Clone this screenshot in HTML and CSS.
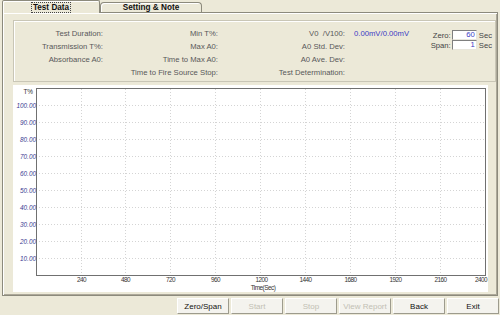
FILE: index.html
```html
<!DOCTYPE html>
<html lang="en">
<head>
    <meta charset="UTF-8">
    <title>Test Data</title>
    <link rel="stylesheet" href="styles.css">
</head>
<body>

    <div class="window">
        <div class="tabs">
            <div class="tab active"><span class="focus">Test Data</span></div>
            <div class="tab">Setting &amp; Note</div>
        </div>

        <div class="tab-panel">
            <div class="group">
                <div class="fields">
                    <span class="lbl">Test Duration:</span>
                    <span class="lbl">Min T%:</span>
                    <span class="lbl">V0 &nbsp;/V100:</span>
                    <span class="val">0.00mV/0.00mV</span>

                    <span class="lbl">Transmission T%:</span>
                    <span class="lbl">Max A0:</span>
                    <span class="lbl">A0 Std. Dev:</span>
                    <span class="val"></span>

                    <span class="lbl">Absorbance A0:</span>
                    <span class="lbl">Time to Max A0:</span>
                    <span class="lbl">A0 Ave. Dev:</span>
                    <span class="val"></span>

                    <span class="lbl"></span>
                    <span class="lbl">Time to Fire Source Stop:</span>
                    <span class="lbl">Test Determination:</span>
                    <span class="val"></span>
                </div>

                <div class="setpoints">
                    <label for="zero">Zero:</label>
                    <span class="box" id="zero">60</span>
                    <span class="unit">Sec</span>
                    <label for="span">Span:</label>
                    <span class="box" id="span">1</span>
                    <span class="unit">Sec</span>
                </div>
            </div>

            <div class="chart">
                <svg width="475" height="207" viewBox="0 0 475 207">
                    <g class="grid">
                        <line x1="23" y1="20.5" x2="472" y2="20.5"/>
                        <line x1="23" y1="37.5" x2="472" y2="37.5"/>
                        <line x1="23" y1="54.5" x2="472" y2="54.5"/>
                        <line x1="23" y1="71.5" x2="472" y2="71.5"/>
                        <line x1="23" y1="88.5" x2="472" y2="88.5"/>
                        <line x1="23" y1="105.5" x2="472" y2="105.5"/>
                        <line x1="23" y1="122.5" x2="472" y2="122.5"/>
                        <line x1="23" y1="139.5" x2="472" y2="139.5"/>
                        <line x1="23" y1="156.5" x2="472" y2="156.5"/>
                        <line x1="23" y1="173.5" x2="472" y2="173.5"/>

                        <line x1="68.5" y1="4" x2="68.5" y2="190"/>
                        <line x1="112.5" y1="4" x2="112.5" y2="190"/>
                        <line x1="157.5" y1="4" x2="157.5" y2="190"/>
                        <line x1="202.5" y1="4" x2="202.5" y2="190"/>
                        <line x1="247.5" y1="4" x2="247.5" y2="190"/>
                        <line x1="292.5" y1="4" x2="292.5" y2="190"/>
                        <line x1="337.5" y1="4" x2="337.5" y2="190"/>
                        <line x1="382.5" y1="4" x2="382.5" y2="190"/>
                        <line x1="427.5" y1="4" x2="427.5" y2="190"/>
                    </g>

                    <rect class="axes" x="23.5" y="3.5" width="449" height="187"/>

                    <text class="axis-name" x="20" y="8.5">T%</text>
                    <g class="y-labels">
                        <text x="23" y="22.8">100.00</text>
                        <text x="23" y="39.8">90.00</text>
                        <text x="23" y="56.8">80.00</text>
                        <text x="23" y="73.8">70.00</text>
                        <text x="23" y="90.8">60.00</text>
                        <text x="23" y="107.8">50.00</text>
                        <text x="23" y="124.8">40.00</text>
                        <text x="23" y="141.8">30.00</text>
                        <text x="23" y="158.8">20.00</text>
                        <text x="23" y="175.8">10.00</text>
                    </g>
                    <g class="x-labels">
                        <text x="68.5" y="197">240</text>
                        <text x="112.5" y="197">480</text>
                        <text x="157.5" y="197">720</text>
                        <text x="202.5" y="197">960</text>
                        <text x="248.5" y="197">1200</text>
                        <text x="292.5" y="197">1440</text>
                        <text x="337.5" y="197">1680</text>
                        <text x="382.5" y="197">1920</text>
                        <text x="427.5" y="197">2160</text>
                        <text x="468" y="197">2400</text>
                        <text x="250" y="204.5">Time(Sec)</text>
                    </g>
                </svg>
            </div>
        </div>

        <div class="buttons">
            <button>Zero/Span</button>
            <button disabled>Start</button>
            <button disabled>Stop</button>
            <button disabled>View Report</button>
            <button>Back</button>
            <button>Exit</button>
        </div>
    </div>

</body>
</html>
```

FILE: styles.css
```css
body {
    margin: 0;
    background-color: #ece9d8;
    font-family: "Liberation Sans", Arial, sans-serif;
}

.window {
    width: 500px;
    height: 315px;
    overflow: hidden;
}

/* tab strip */

.tabs {
    display: flex;
    align-items: flex-end;
    height: 12px;
    padding-left: 2px;
    position: relative;
    z-index: 1;
}

    .tabs .tab {
        box-sizing: border-box;
        height: 10px;
        width: 102px;
        border: 1px solid #8c8a7c;
        border-bottom: none;
        border-radius: 4px 4px 0 0;
        background-color: #ece9d8;
        font-size: 8.2px;
        font-weight: bold;
        color: #111;
        text-align: center;
        line-height: 9px;
        box-shadow: inset 1px 1px 0 #fff;
    }

    .tabs .tab.active {
        width: 98px;
        height: 13px;
        margin-bottom: -1px;
        border-radius: 2px 2px 0 0;
        padding-top: 2px;
        line-height: 9px;
    }

    .tabs .focus {
        display: inline-block;
        vertical-align: top;
        height: 9px;
        line-height: 9px;
        padding: 0 1px;
        border: 1px dotted #444;
        margin-top: -1px;
    }

/* main tab page */

.tab-panel {
    box-sizing: border-box;
    width: 496px;
    height: 284px;
    margin-left: 2px;
    padding: 7px 0 3px 10px;
    border: 1px solid #8c8a7c;
    box-shadow: inset 1px 1px 0 #fff, inset -1px -1px 0 #aca899;
}

.group {
    box-sizing: border-box;
    display: flex;
    height: 62px;
    margin-right: 1px;
    padding: 6px 3px 2px 0;
    border: 1px solid #c9c6b6;
    box-shadow: inset 1px 1px 0 #fff;
    font-size: 7.7px;
    color: #585858;
}

.fields {
    display: grid;
    grid-template-columns: 89px 115px 127px 70px;
    grid-auto-rows: 13px;
    align-items: center;
    flex-shrink: 0;
}

    .fields .lbl {
        text-align: right;
        white-space: nowrap;
    }

    .fields .val {
        padding-left: 9px;
        color: #3a3ac4;
        white-space: nowrap;
    }

.setpoints {
    margin-left: auto;
    margin-top: 3px;
    display: grid;
    grid-template-columns: auto 25px auto;
    grid-auto-rows: 10px;
    align-items: center;
    align-self: flex-start;
    flex-shrink: 0;
}

    .setpoints label {
        text-align: right;
        padding-right: 1px;
        color: #444;
    }

    .setpoints .box {
        box-sizing: border-box;
        height: 10px;
        padding-right: 1px;
        background-color: #fff;
        border: 1px solid;
        border-color: #7f7f7f #e8e6dc #e8e6dc #7f7f7f;
        text-align: right;
        line-height: 8px;
        color: #3a3ac4;
    }

    .setpoints .unit {
        padding-left: 2px;
        color: #444;
    }

/* chart */

.chart {
    width: 475px;
    height: 207px;
    margin-top: 3px;
    background-color: #fff;
}

    .chart svg {
        display: block;
        font-family: "Liberation Sans", Arial, sans-serif;
    }

    .chart .grid line {
        stroke: #d4d4d4;
        stroke-width: 1;
        stroke-dasharray: 1 2;
    }

    .chart .axes {
        fill: none;
        stroke: #707070;
        stroke-width: 1;
    }

    .chart .axis-name {
        font-size: 6.4px;
        fill: #333;
        text-anchor: end;
    }

    .chart .y-labels text {
        font-size: 6.4px;
        font-style: italic;
        fill: #3b3b92;
        text-anchor: end;
    }

    .chart .x-labels text {
        font-size: 6.4px;
        fill: #333;
        text-anchor: middle;
        letter-spacing: -0.5px;
    }

/* bottom buttons */

.buttons {
    display: flex;
    justify-content: flex-end;
    gap: 2px;
    margin-top: 2px;
    padding-right: 1px;
}

    .buttons button {
        box-sizing: border-box;
        width: 52px;
        height: 16px;
        padding: 0;
        background-color: #f4f3ee;
        border: 1px solid;
        border-color: #fff #9d9b8d #9d9b8d #fff;
        font-family: "Liberation Sans", Arial, sans-serif;
        font-size: 8px;
        color: #111;
    }

        .buttons button:disabled {
            color: #c2c0b4;
        }
```
